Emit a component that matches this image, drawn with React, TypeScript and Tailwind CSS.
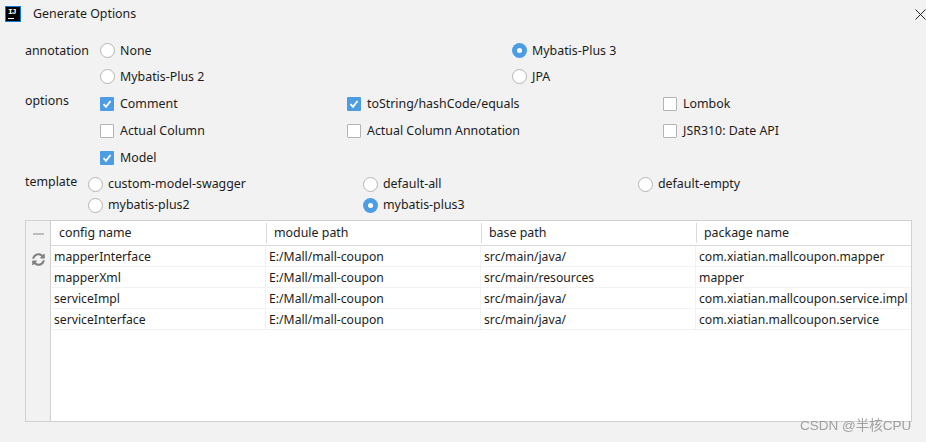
import { FaSyncAlt } from "react-icons/fa";

function Radio({ label, checked = false }: { label: string; checked?: boolean }) {
  return (
    <div className="flex items-center gap-[5px]">
      {checked ? (
        <span className="flex h-[15px] w-[15px] items-center justify-center rounded-full bg-[#4d9de5]">
          <span className="h-[5px] w-[5px] rounded-full bg-white" />
        </span>
      ) : (
        <span className="h-[15px] w-[15px] rounded-full border border-[#b4b4b4] bg-white" />
      )}
      <span>{label}</span>
    </div>
  );
}

function Check({ label, checked = false }: { label: string; checked?: boolean }) {
  return (
    <div className="flex items-center gap-[6px]">
      {checked ? (
        <span className="flex h-[14px] w-[14px] items-center justify-center rounded-[1px] bg-[#4d9de5]">
          <svg width="10" height="10" viewBox="0 0 10 10" fill="none">
            <path d="M1.5 5.2 L4 7.8 L8.5 2" stroke="white" strokeWidth="1.8" />
          </svg>
        </span>
      ) : (
        <span className="h-[14px] w-[14px] rounded-[1px] border border-[#b4b4b4] bg-white" />
      )}
      <span>{label}</span>
    </div>
  );
}

const columns = ["config name", "module path", "base path", "package name"];

const rows = [
  ["mapperInterface", "E:/Mall/mall-coupon", "src/main/java/", "com.xiatian.mallcoupon.mapper"],
  ["mapperXml", "E:/Mall/mall-coupon", "src/main/resources", "mapper"],
  ["serviceImpl", "E:/Mall/mall-coupon", "src/main/java/", "com.xiatian.mallcoupon.service.impl"],
  ["serviceInterface", "E:/Mall/mall-coupon", "src/main/java/", "com.xiatian.mallcoupon.service"],
];

export default function App() {
  return (
    <div className="relative flex h-[442px] w-[926px] flex-col overflow-hidden bg-[#f2f2f2] font-['Noto_Sans','Noto_Sans_CJK_SC',sans-serif] text-[12.4px] text-[#1c1c1c]">
      {/* title bar */}
      <div className="flex h-[28px] items-center justify-between pl-[5px]">
        <div className="flex items-center gap-[12px]">
          <div className="flex h-[16px] w-[16px] flex-col border border-[#0a7ae0] bg-black pt-[1px] pl-[2px] font-['Liberation_Mono',monospace] text-[8px] leading-[8px] font-bold text-white">
            <span className="tracking-[-1px]">IJ</span>
            <span className="mt-[2px] h-[1px] w-[6px] bg-white" />
          </div>
          <span>Generate Options</span>
        </div>
        <svg width="11" height="11" viewBox="0 0 11 11" fill="none">
          <path d="M0.5 0.5 L10.5 10.5 M10.5 0.5 L0.5 10.5" stroke="#222" strokeWidth="1" />
        </svg>
      </div>

      {/* annotation */}
      <div className="mt-[10px] grid h-[52px] grid-cols-[75px_412px_1fr] grid-rows-2 items-center pl-[25px]">
        <span>annotation</span>
        <Radio label="None" />
        <Radio label="Mybatis-Plus 3" checked />
        <span />
        <Radio label="Mybatis-Plus 2" />
        <Radio label="JPA" />
      </div>

      {/* options */}
      <div className="mt-[1px] grid h-[81px] grid-cols-[75px_247px_316px_1fr] grid-rows-3 items-center pl-[25px]">
        <span className="-translate-y-[3px]">options</span>
        <Check label="Comment" checked />
        <Check label="toString/hashCode/equals" checked />
        <Check label="Lombok" />
        <span />
        <Check label="Actual Column" />
        <Check label="Actual Column Annotation" />
        <Check label="JSR310: Date API" />
        <span />
        <Check label="Model" checked />
      </div>

      {/* template */}
      <div className="mt-[2px] grid h-[42px] grid-cols-[63px_275px_275px_1fr] grid-rows-2 items-center pl-[25px]">
        <span className="-translate-y-[2px]">template</span>
        <Radio label="custom-model-swagger" />
        <Radio label="default-all" />
        <Radio label="default-empty" />
        <span />
        <Radio label="mybatis-plus2" />
        <Radio label="mybatis-plus3" checked />
      </div>

      {/* table */}
      <div className="mt-[4px] ml-[25px] flex h-[202px] w-[887px] border border-[#d1d1d1]">
        <div className="flex w-[25px] flex-col items-center border-r border-[#d1d1d1]">
          <span className="mt-[12px] h-[2px] w-[11px] bg-[#bdbdbd]" />
          <FaSyncAlt className="mt-[18px] text-[13px] text-[#7f7f7f]" />
        </div>
        <div className="flex-1 bg-white">
          <div className="grid h-[25px] grid-cols-[215px_215px_215px_1fr] border-b border-[#d9d9d9]">
            {columns.map((col, i) => (
              <div key={col} className="flex items-center pl-[8px]">
                <span className={i > 0 ? "flex h-[20px] items-center border-l border-[#d9d9d9] pl-[7px] -ml-[8px]" : ""}>{col}</span>
              </div>
            ))}
          </div>
          {rows.map((row) => (
            <div key={row[0]} className="grid h-[21px] grid-cols-[215px_215px_215px_1fr] border-b border-[#f2f2f2] text-[12.2px]">
              {row.map((cell, i) => (
                <div key={i} className="flex items-center border-r border-[#f2f2f2] pt-[2px] pl-[3px] last:border-r-0 whitespace-nowrap">
                  {cell}
                </div>
              ))}
            </div>
          ))}
        </div>
      </div>

      {/* watermark */}
      <span className="absolute top-[416px] left-[800px] text-[13.5px] leading-[20px] text-[#8c8c8c]/80 blur-[0.4px] font-['Liberation_Sans','Noto_Sans_CJK_SC',sans-serif]">
        CSDN @半核CPU
      </span>
    </div>
  );
}
